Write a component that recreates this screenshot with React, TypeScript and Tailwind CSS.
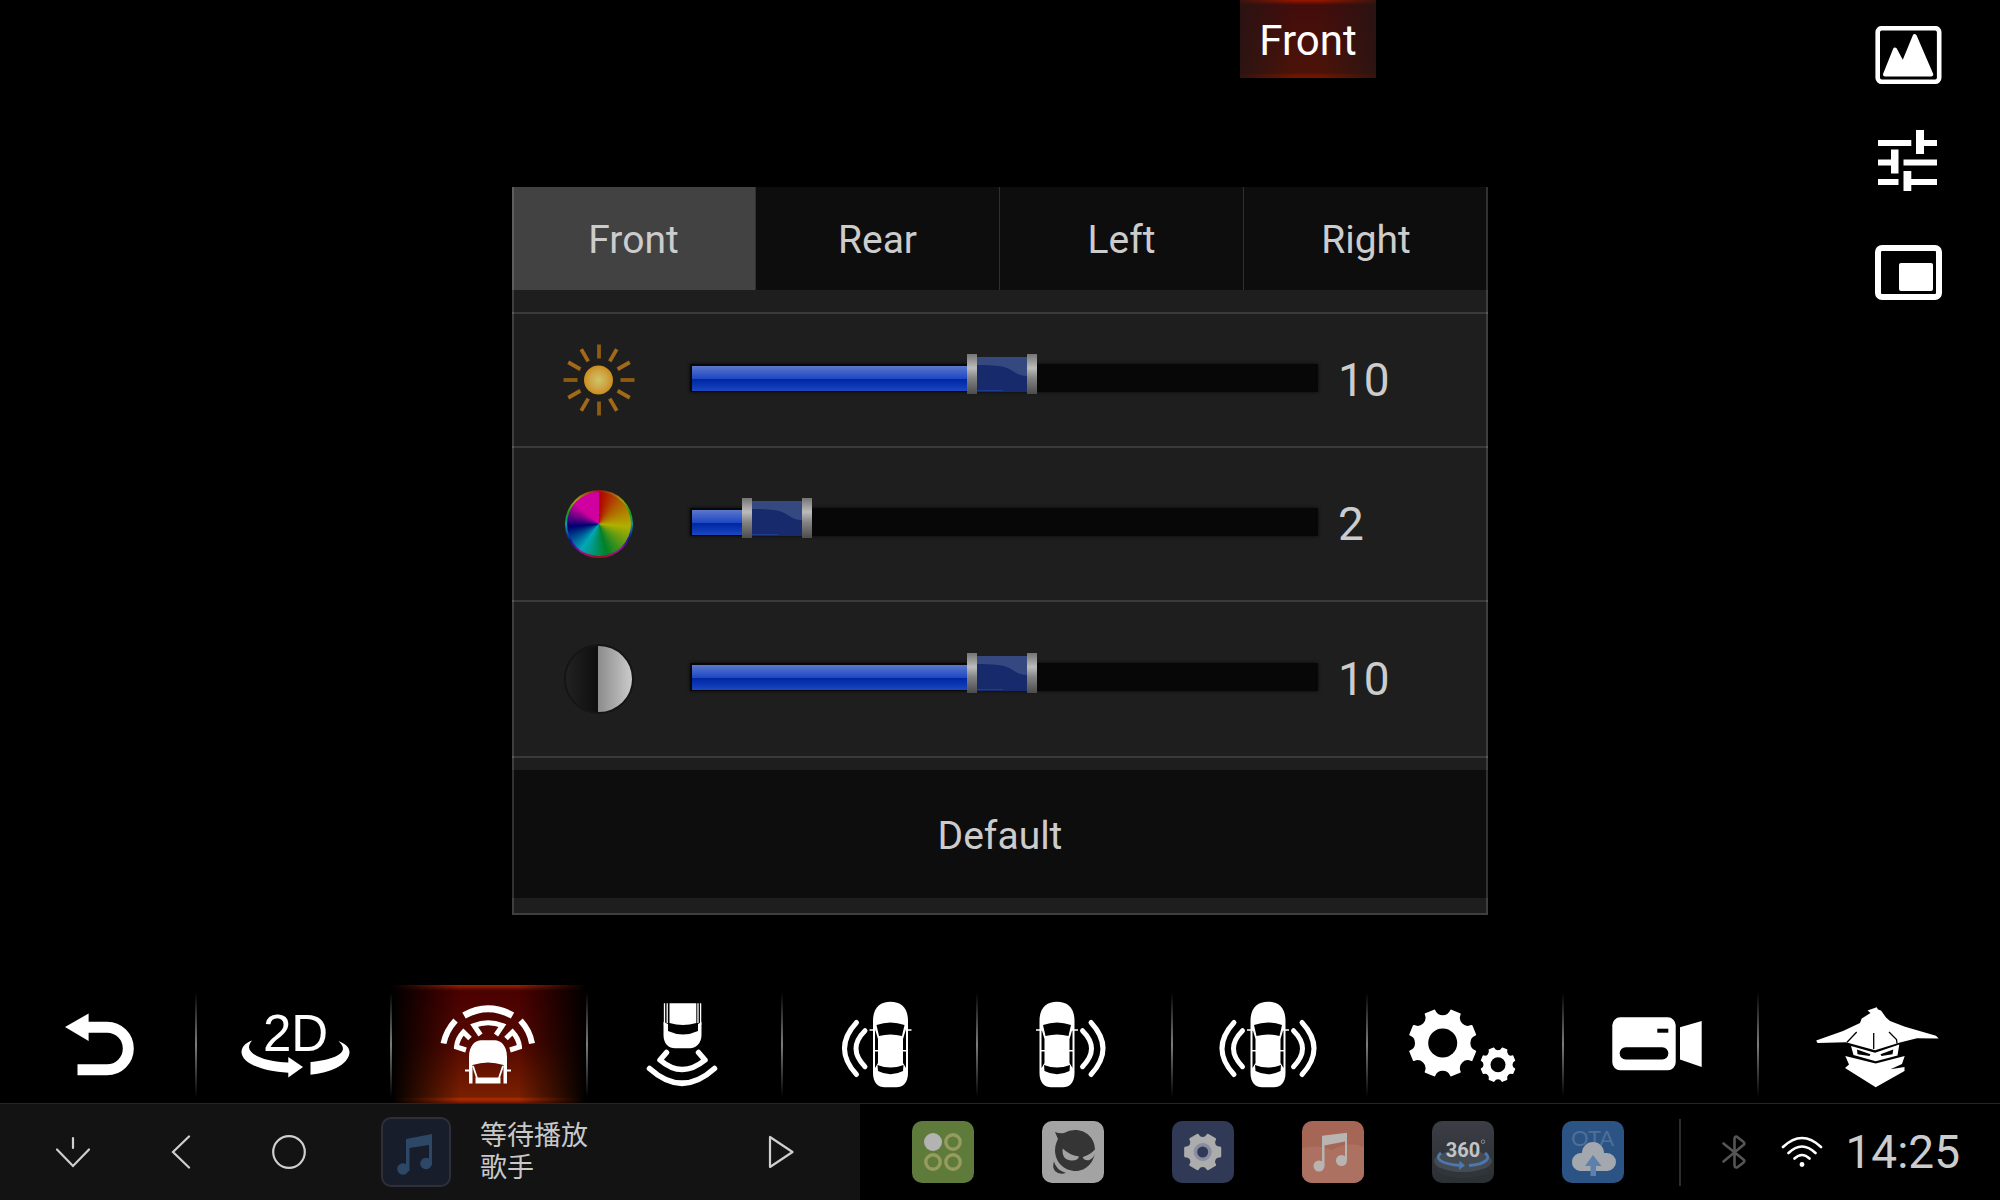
import { useState } from "react"
import type { CSSProperties, ReactNode } from "react"

/* ── Geometry helpers ──────────────────────────────────────────────────── */
function gearPath(cx: number, cy: number, r: number, teeth: number, toothDeg: number, notch: number, startDeg: number) {
  const step = 360 / teeth
  const pt = (deg: number) => {
    const a = (deg * Math.PI) / 180
    return `${(cx + r * Math.cos(a)).toFixed(2)} ${(cy + r * Math.sin(a)).toFixed(2)}`
  }
  let d = ""
  for (let i = 0; i < teeth; i++) {
    const mid = startDeg + i * step
    d += `${i === 0 ? "M" : "L"}${pt(mid - toothDeg)} L${pt(mid + toothDeg)} `
    d += `A${notch} ${notch} 0 0 0 ${pt(mid + step - toothDeg)} `
  }
  return d + "Z"
}

/* ── Toolbar icons, all drawn on a 160 × 118 canvas ────────────────────── */
function ToolIcon({ children }: { children: ReactNode }) {
  return (
    <svg viewBox="0 0 160 118" className="h-[118px] w-[160px] shrink-0" fill="white" aria-hidden="true">
      {children}
    </svg>
  )
}

function TopCar({ x }: { x: number }) {
  return (
    <g transform={`translate(${x} 0)`}>
      <path d="M-17.5 36 C-17.5 22 -10 16.7 0 16.7 C10 16.7 17.5 22 17.5 36 V88 C17.5 98 12 102.3 6 102.3 H-6 C-12 102.3 -17.5 98 -17.5 88 Z" />
      <path d="M-14 40 Q0 35 14 40 L11.5 51 Q0 48 -11.5 51 Z" fill="black" />
      <path d="M-15.5 44 L-12.5 54 V78 L-15.5 83 Z M15.5 44 L12.5 54 V78 L15.5 83 Z" fill="black" />
      <path d="M-13 80 Q0 85 13 80 L12.5 86 Q0 92.5 -12.5 86 Z" fill="black" />
      <path d="M-16 65.7 H-11 M16 65.7 H11 M-21 45 H-15 M21 45 H15" stroke="white" strokeWidth="1.6" />
    </g>
  )
}

function Waves({ x, side }: { x: number; side: 1 | -1 }) {
  return (
    <g transform={`translate(${x} 0) scale(${side} 1)`} fill="none" stroke="white" strokeWidth="5" strokeLinecap="round">
      <path d="M25.5 45.7 Q43.5 63.5 25.5 81.7" />
      <path d="M34 37.5 Q58 63.5 34 89.5" />
    </g>
  )
}

const icons = {
  back: (
    <ToolIcon>
      <path d="M46 42 L69.6 28.5 V56 Z" />
      <path d="M68 42.2 H88 a21.3 21.3 0 0 1 0 42.6 H58.5" fill="none" stroke="white" strokeWidth="11" />
    </ToolIcon>
  ),
  flat: (
    <ToolIcon>
      <text x="49" y="66" fontSize="51" fontFamily="Liberation Sans, Arial, sans-serif">2D</text>
      <path d="M38 55.5 C31 58 27.5 62 27.5 67.5 C28.5 78 46 86 74.3 87.8 V92.5 L89 82 L74.3 72 V77.5 C55 77 36 71 35 62.5 C35 60 36 58 38 55.5 Z" />
      <path d="M124.5 56 C132 59 136 63 135.5 68 C134 80 116 88 96.5 89.7 V77 C114 75.5 128 71 129 64 C129 61 127 58.5 124.5 56 Z" />
    </ToolIcon>
  ),
  front: (
    <ToolIcon>
      <g fill="none" stroke="white" strokeWidth="6">
        <path d="M55 30.5 Q79 17 103.5 30.5" strokeWidth="7" />
        <path d="M34.5 58.5 Q37 46 46.5 35.5 M123 58.5 Q121 46 111.5 35.5" />
        <path d="M71.5 50 L65 40.5 Q79 35 93.5 40.5 L87 50" strokeWidth="5" />
        <path d="M61 53.5 L54.5 47 Q48 54 47.5 62 L57 65 M97 53.5 L103.5 47 Q110 54 110.5 62 L101 65" strokeWidth="5" />
      </g>
      <path d="M60 98.5 V72 C60 60 67 55.3 72 55.3 H86 C91 55.3 98 60 98 72 V98.5 H94.5 V80 Q79 75 63.5 80 V98.5 Z" />
      <path d="M66.5 92.5 H91.5 V98.5 H66.5 Z" />
      <path d="M64 81 L68 93 M94 81 L90 93 M56 85.5 H62 M102 85.5 H96" stroke="white" strokeWidth="1.8" />
    </ToolIcon>
  ),
  rear: (
    <ToolIcon>
      <path d="M65.5 18.3 H92.3 V38 Q79 42 65.5 38 Z" />
      <path d="M59.5 37 L64 39 L64 46 Q79 53 94 46 L94 39 L97.5 37 V50 C97.5 59 91 63.3 86 63.3 H71 C65 63.3 59.5 59 59.5 50 Z" />
      <path d="M60.5 18.3 V40 M63.2 18.3 V38 M96.6 18.3 V40 M94 18.3 V38" stroke="white" strokeWidth="1.3" />
      <g fill="none" stroke="white" strokeWidth="5.5" strokeLinecap="round">
        <path d="M62.5 67.5 L56 75 Q78 94 101 75 L94.5 67.5" strokeLinejoin="round" />
        <path d="M45.5 83.5 Q78 113 110.5 83.5" />
      </g>
    </ToolIcon>
  ),
  left: (
    <ToolIcon>
      <TopCar x={91.5} />
      <Waves x={91.5} side={-1} />
    </ToolIcon>
  ),
  right: (
    <ToolIcon>
      <TopCar x={62} />
      <Waves x={62} side={1} />
    </ToolIcon>
  ),
  both: (
    <ToolIcon>
      <TopCar x={78} />
      <Waves x={78} side={1} />
      <Waves x={78} side={-1} />
    </ToolIcon>
  ),
  gears: (
    <ToolIcon>
      <path d={gearPath(57.7, 58, 33.5, 8, 8, 9, 22.5)} stroke="white" strokeWidth="2" strokeLinejoin="round" />
      <circle cx="57.7" cy="58" r="14.5" fill="black" />
      <path d={gearPath(113, 79.7, 17, 8, 8, 4.7, 22.5)} stroke="white" strokeWidth="1.5" strokeLinejoin="round" />
      <circle cx="113" cy="79.7" r="7.5" fill="black" />
    </ToolIcon>
  ),
  camera: (
    <ToolIcon>
      <rect x="32.3" y="32.3" width="63.4" height="53" rx="8" />
      <rect x="39.7" y="62.3" width="48.6" height="12.2" rx="6" fill="black" />
      <rect x="77.3" y="43.7" width="11" height="4" fill="black" />
      <path d="M100 42.3 L121.7 36 V82 L100 74.5 Z" />
    </ToolIcon>
  ),
  ninja: (
    <ToolIcon>
      <path d="M77.7 22.3 L68.5 25.5 L71.5 28 L62.7 33.5 L61 38 L44 46 L17.2 55.5 L18.5 58 L47 57.3 L76 65.3 L101 57.5 L118 53.3 L139.7 53.5 L137 50.8 L106 41.8 L91 36 L87 32.5 L82 25.5 L79 24.5 Z" />
      <path d="M57.7 47 L48 57.3 M74.7 48 V64 M90 47 L97.5 54.5 L98 58.5" stroke="black" strokeWidth="1.3" fill="none" />
      <path d="M52 61 L76 67.8 L100.3 59.5 L98.5 70.5 L76.7 76.3 L54.5 70 Z" />
      <path d="M58 64.5 L71.5 69.3 L70.5 71 L58.5 69.3 Z M94.3 64.5 L81.5 69.3 L82.5 71 L93.5 69.3 Z" fill="black" />
      <path d="M46.3 71 L76.7 78.5 L105.7 71 L103 79 L91.5 84.3 L105.5 82 L105.5 86 L76.7 102.3 L46 83 L50 79.5 Z" />
    </ToolIcon>
  ),
}

const tools: { id: keyof typeof icons; label: string }[] = [
  { id: "back", label: "Back" },
  { id: "flat", label: "2D view" },
  { id: "front", label: "Front view" },
  { id: "rear", label: "Rear view" },
  { id: "left", label: "Left view" },
  { id: "right", label: "Right view" },
  { id: "both", label: "Both sides" },
  { id: "gears", label: "Settings" },
  { id: "camera", label: "Recorder" },
  { id: "ninja", label: "Guard" },
]

/* ── Adjustment icons ──────────────────────────────────────────────────── */
function SunIcon() {
  return (
    <svg viewBox="0 0 72 72" className="size-[72px]" aria-hidden="true">
      <defs>
        <radialGradient id="sun">
          <stop offset="0" stopColor="#cfc468" />
          <stop offset="0.6" stopColor="#cda545" />
          <stop offset="1" stopColor="#cb8c1c" />
        </radialGradient>
      </defs>
      {Array.from({ length: 12 }, (_, i) => (
        <line key={i} x1="36" y1="0.5" x2="36" y2="14.5" stroke={i % 3 === 0 ? "#8e5c10" : "#a26a18"} strokeWidth="3.8" transform={`rotate(${i * 30} 36 36)`} />
      ))}
      <circle cx="35.5" cy="36" r="14.5" fill="url(#sun)" />
    </svg>
  )
}

function ColorIcon() {
  return (
    <div className="grid size-[68px] place-items-center rounded-full bg-[conic-gradient(#a01010,#a0a010_45deg,#10a010_70deg,#10a0a0_90deg,#1010a0_115deg,#a010a0_140deg,#a01010_180deg,#a010a0_215deg,#1010a0_240deg,#10a0a0_270deg,#10a010_290deg,#a0a010_315deg,#a01010)]">
      <div className="size-16 rounded-full bg-[conic-gradient(#b00000,#b06000_45deg,#b0b000_95deg,#00802a_165deg,#00a8b8_215deg,#000070_265deg,#780088_290deg,#d000a0_310deg,#d000a0)]" />
    </div>
  )
}

function ContrastIcon() {
  return (
    <div className="flex size-[70px] overflow-hidden rounded-full border-2 border-[#151515]">
      <div className="flex-1 bg-gradient-to-r from-[#222222] to-[#0e0e0e]" />
      <div className="w-[34px] bg-gradient-to-r from-[#8c8c8c] to-[#cbcbcb]" />
    </div>
  )
}

/* ── Slider ────────────────────────────────────────────────────────────── */
function SliderThumb({ style }: { style: CSSProperties }) {
  return (
    <svg viewBox="0 0 70 40" className="pointer-events-none absolute top-0 h-10 w-[70px]" style={style} aria-hidden="true">
      <defs>
        <linearGradient id="cap" x2="0" y2="1">
          <stop offset="0" stopColor="#747474" />
          <stop offset="0.35" stopColor="#bcbcbc" />
          <stop offset="0.6" stopColor="#848484" />
          <stop offset="1" stopColor="#4c4c4c" />
        </linearGradient>
      </defs>
      <rect x="9" y="3" width="52" height="35" fill="#162a6c" />
      <path d="M9 3 H60 V22 C47 22 46 13 31 12 C24 11 16 11 9 11 Z" fill="#364880" />
      <path d="M10 36.5 H36" stroke="#1c3c98" strokeWidth="1" />
      <rect width="10" height="40" fill="url(#cap)" />
      <rect x="60" width="10" height="40" fill="url(#cap)" />
    </svg>
  )
}

interface SliderProps {
  label: string
  value: number
  onChange: (value: number) => void
}

function Slider({ label, value, onChange }: SliderProps) {
  const offset = `calc((100% - 70px) * ${value / 20})`
  return (
    <div className="relative h-[52px] flex-1">
      <div className="absolute top-[10px] right-0 left-1 h-7 bg-[#070707] shadow-[0_0_3px_#0a0a0a]" />
      <div
        className="absolute top-3 left-[6px] h-[25px] bg-[linear-gradient(#5a78cc,#1f48c4_50%,#0028a4_54%,#0a34b0_75%,#1c48c0)]"
        style={{ width: offset }}
      />
      <SliderThumb style={{ left: offset }} />
      <input
        type="range"
        min={0}
        max={20}
        value={value}
        aria-label={label}
        onChange={(e) => onChange(Number(e.target.value))}
        className="absolute inset-x-0 top-0 h-10 w-full cursor-pointer appearance-none bg-transparent [&::-webkit-slider-thumb]:h-10 [&::-webkit-slider-thumb]:w-[70px] [&::-webkit-slider-thumb]:appearance-none"
      />
    </div>
  )
}

/* ── Settings dialog ───────────────────────────────────────────────────── */
const tabs = ["Front", "Rear", "Left", "Right"]
const defaults = { brightness: 10, color: 2, contrast: 10 }

function Dialog() {
  const [tab, setTab] = useState("Front")
  const [values, setValues] = useState(defaults)

  const rows = [
    { key: "brightness" as const, icon: <SunIcon />, height: "h-[134px]" },
    { key: "color" as const, icon: <ColorIcon />, height: "h-[154px]" },
    { key: "contrast" as const, icon: <ContrastIcon />, height: "h-[156px]" },
  ]

  return (
    <section className="relative mx-auto mt-[109px] w-full max-w-[976px] bg-[#1e1e1e] text-[#cccccc] after:pointer-events-none after:absolute after:inset-0 after:border-x-2 after:border-b-2 after:border-white/15">
      <div className="grid h-[103px] grid-cols-4 divide-x divide-[#303030] bg-[#0d0d0d]">
        {tabs.map((t) => (
          <button key={t} type="button" onClick={() => setTab(t)} className={t === tab ? "bg-[#424242] pt-1 text-[39px]" : "pt-1 text-[39px]"}>
            {t}
          </button>
        ))}
      </div>

      <div className="mt-[22px] border-b-2 border-[#3a3a3a]">
        {rows.map((row) => (
          <div key={row.key} className={`flex items-center border-t-2 border-[#3a3a3a] pl-[51px] ${row.height}`}>
            <div className="grid w-[72px] shrink-0 place-items-center">{row.icon}</div>
            <div className="flex flex-1 pl-[51px]">
              <Slider label={row.key} value={values[row.key]} onChange={(v) => setValues({ ...values, [row.key]: v })} />
            </div>
            <output className="w-[170px] pl-5 text-[46px] leading-none">{values[row.key]}</output>
          </div>
        ))}
      </div>

      <button type="button" onClick={() => setValues(defaults)} className="mt-3 block h-32 w-full bg-[#0d0d0d] pt-1 text-[39px]">
        Default
      </button>
      <div className="h-[17px]" />
    </section>
  )
}

/* ── Side buttons over the camera view ─────────────────────────────────── */
function SideButtons() {
  return (
    <nav className="absolute top-[26px] right-[58px] flex w-[67px] flex-col items-center">
      <button type="button" aria-label="Picture">
        <svg viewBox="0 0 67 58" className="block h-[58px] w-[67px]" fill="white">
          <rect x="2.7" y="2.2" width="61.5" height="53.5" rx="4" fill="none" stroke="white" strokeWidth="4.6" />
          <path d="M10 48.5 L20 23.5 L28 38.5 L39.7 10 L56.3 48.5 Z" stroke="white" strokeWidth="4" strokeLinejoin="round" />
        </svg>
      </button>
      <button type="button" aria-label="Adjust" className="mt-[46px]">
        <svg viewBox="0 0 61 61" className="block size-[61px]" fill="white">
          <path d="M0 10 H33.3 V16 H0 Z M38 0 H46 V10 H59 V16 H46 V24 H38 Z" />
          <path d="M0 29.5 H13 V19.5 H20.5 V43.5 H13 V35.5 H0 Z M25.5 29.5 H59 V35.5 H25.5 Z" />
          <path d="M0 49 H20.5 V55 H0 Z M25.5 41 H33.3 V49 H59 V55 H33.3 V61 H25.5 Z" />
        </svg>
      </button>
      <button type="button" aria-label="Picture in picture" className="mt-[54px]">
        <svg viewBox="0 0 67 55" className="block h-[55px] w-[67px]" fill="white">
          <rect x="3" y="3" width="61" height="49" rx="4" fill="none" stroke="white" strokeWidth="6" />
          <rect x="24" y="18" width="34" height="28" rx="2" />
        </svg>
      </button>
    </nav>
  )
}

/* ── View toolbar ──────────────────────────────────────────────────────── */
function Toolbar() {
  const [active, setActive] = useState("front")
  return (
    <nav className="flex h-[118px] pl-0.5">
      {tools.map((tool, i) => (
        <div key={tool.id} className={i < 9 ? "flex w-[9.77%] shrink-0 items-center" : "flex flex-1 items-center"}>
          <button
            type="button"
            aria-label={tool.label}
            onClick={() => setActive(tool.id)}
            className={
              tool.id === active
                ? "flex h-full flex-1 justify-center bg-[linear-gradient(90deg,#000_0%,transparent_35%,transparent_65%,#000_100%),linear-gradient(#a82000_0px,#500800_5px,transparent_6px,transparent_112px,#b02c00_114px,#701800_118px),linear-gradient(#480000,#560800_50%,#7c2200)]"
                : "flex h-full flex-1 justify-center"
            }
          >
            {icons[tool.id]}
          </button>
          {i < 9 && <span className="h-[105px] w-[2px] bg-gradient-to-b from-transparent via-[#7c7c7c] to-transparent" />}
        </div>
      ))}
    </nav>
  )
}

/* ── Dock apps, 62 × 62 tiles ──────────────────────────────────────────── */
const apps = [
  {
    label: "Apps",
    tile: "bg-[#5e7b3c]",
    art: (
      <>
        <circle cx="21" cy="21" r="9" fill="#b3b3b3" />
        <g fill="none" stroke="#959c5c" strokeWidth="3.4">
          <circle cx="41" cy="21" r="7.2" />
          <circle cx="21" cy="41" r="7.2" />
          <circle cx="41" cy="41" r="7.2" />
        </g>
      </>
    ),
  },
  {
    label: "Assistant",
    tile: "bg-[#a3a3a3]",
    art: (
      <>
        <path d="M13 11 Q18 13 22 12 Q27 9 33 9 C45 9 53 18 53 29 C53 41 44 50 34 50 C22 50 13 41 13 29 C13 24 15 20 16 18 Z" fill="#353535" />
        <path d="M20.7 27.5 Q27 34 37 35.5 Q36 40 29 39.5 C22 39 20 34 20.7 27.5 Z M53.5 28 Q48 34 40.7 36 Q42 40 47.5 39 C52 37 54 32 53.5 28 Z" fill="#a3a3a3" />
        <path d="M12 40.5 Q14 49 24 52 Q17 54 13 50 Q10 46 12 40.5 Z" fill="#353535" />
      </>
    ),
  },
  {
    label: "Settings",
    tile: "bg-[#303a57]",
    art: (
      <>
        <path d={gearPath(30.7, 31, 17.5, 6, 13, 5.6, 0)} fill="#acacac" stroke="#acacac" strokeWidth="3" strokeLinejoin="round" />
        <circle cx="30.7" cy="31" r="9" fill="#888da0" />
        <circle cx="30.7" cy="31" r="5.5" fill="#303a57" />
      </>
    ),
  },
  {
    label: "Music",
    tile: "bg-[#a56655]",
    art: (
      <>
        <path d="M0 27 Q14 23 30 29 Q46 20 62 26 V62 H0 Z" fill="#ad7162" />
        <path d="M20 14.7 L45 11.7 V39 H43 V20.5 L22.5 24.5 V45 H20 Z" fill="#b8b4b2" />
        <circle cx="17" cy="45" r="5.5" fill="#b8b4b2" />
        <circle cx="39.5" cy="39.5" r="5.5" fill="#b8b4b2" />
      </>
    ),
  },
  {
    label: "360 camera",
    tile: "bg-gradient-to-b from-[#3b3e45] to-[#2b3034]",
    art: (
      <>
        <ellipse cx="31" cy="45" rx="29" ry="12" fill="#30353a" />
        <ellipse cx="31" cy="40" rx="29" ry="11" fill="#454b52" />
        <g fill="none" stroke="#4c78ae" strokeWidth="2.8">
          <path d="M9 32 C2 37 8 43 29 44.5" />
          <path d="M53 32 C60 37 54 43 37 44.5" />
        </g>
        <path d="M27.5 39.5 L33 44.5 L27 49 Z" fill="#4c78ae" />
        <text x="31" y="36" fontSize="20" fontWeight="700" textAnchor="middle" fill="#c4c4c4" fontFamily="Roboto, sans-serif">360</text>
        <circle cx="51" cy="20.7" r="1.8" fill="none" stroke="#9a9a9a" strokeWidth="0.8" />
      </>
    ),
  },
  {
    label: "Update",
    tile: "bg-[#2b5485]",
    art: (
      <>
        <text x="9" y="25" fontSize="22" fill="#4f6e98" fontFamily="Lato, sans-serif">OTA</text>
        <path d="M18 50 a9 9 0 0 1 2 -18 a11 11 0 0 1 22 0 h3 a9 9 0 0 1 0 18 Z" fill="#a2a8ad" />
        <path d="M31 34 L39.5 45 H34 V55 H28.5 V45 H23 Z" fill="#5d80ad" />
      </>
    ),
  },
]

/* ── System bar ────────────────────────────────────────────────────────── */
function SystemBar() {
  return (
    <footer className="flex h-[97px] border-t border-[#262626]">
      <div className="flex w-[43%] items-center bg-[#131313] pl-14">
        <div className="flex items-center text-[#cfcfcf]">
          <button type="button" aria-label="Hide">
            <svg viewBox="0 0 34 34" className="size-[34px]" fill="none" stroke="currentColor" strokeWidth="2.2" strokeLinecap="round">
              <path d="M17 3 V13 M1 14.5 L17 31 L33 14.5" />
            </svg>
          </button>
          <button type="button" aria-label="Previous screen" className="ml-[81px]">
            <svg viewBox="0 0 20 34" className="h-[34px] w-5" fill="none" stroke="currentColor" strokeWidth="2.2" strokeLinecap="round">
              <path d="M18 1.5 L2 17 L18 32.5" />
            </svg>
          </button>
          <button type="button" aria-label="Home" className="ml-[81px]">
            <svg viewBox="0 0 34 34" className="size-[34px]" fill="none" stroke="currentColor" strokeWidth="2.2">
              <circle cx="17" cy="17" r="15.8" />
            </svg>
          </button>
        </div>

        <div className="ml-[75px] grid size-[70px] shrink-0 place-items-center rounded-[10px] border-2 border-[#302f39] bg-[#171d2b]">
          <svg viewBox="0 0 66 66" className="size-[66px]" aria-hidden="true">
            <g fill="#2c4866">
              <path d="M23 20 L49 15 V46 H46 V26 L26.5 29 V52 H23 Z" />
              <circle cx="20" cy="50" r="5.8" />
              <circle cx="43" cy="44.5" r="5.8" />
            </g>
          </svg>
        </div>
        <div className="ml-[29px] text-[27px] leading-8 text-[#c8c8c8]">
          <div>等待播放</div>
          <div>歌手</div>
        </div>
        <button type="button" aria-label="Play" className="mr-[66px] ml-auto text-[#cfcfcf]">
          <svg viewBox="0 0 26 34" className="h-[34px] w-[26px]" fill="none" stroke="currentColor" strokeWidth="2.2" strokeLinejoin="round">
            <path d="M2 2 V32 L24.5 17 Z" />
          </svg>
        </button>
      </div>

      <div className="flex flex-1 items-center pl-[52px]">
        <div className="flex gap-[68px]">
          {apps.map((app) => (
            <button key={app.label} type="button" aria-label={app.label} className={`size-[62px] overflow-hidden rounded-[10px] ${app.tile}`}>
              <svg viewBox="0 0 62 62" className="size-[62px]">
                {app.art}
              </svg>
            </button>
          ))}
        </div>
        <span className="ml-[55px] h-[67px] w-[2px] bg-[#2c2c2c]" />
        <svg viewBox="0 0 24 34" className="ml-[41px] h-[34px] w-6" fill="none" stroke="#555555" strokeWidth="2.6" strokeLinecap="round" strokeLinejoin="round" aria-hidden="true">
          <path d="M1.5 8.5 L22 25 Q23 26.5 21 28 L15 32.5 Q12.5 33 12.5 30 V4 Q12.5 1 15 1.8 L21 6.5 Q23 8 22 9.5 L1.5 26.5" />
        </svg>
        <svg viewBox="0 0 42 32" className="ml-[35px] h-8 w-[42px]" fill="none" stroke="white" strokeWidth="2.6" strokeLinecap="round" aria-hidden="true">
          <path d="M2 11 Q21 -7 40 11 M7.5 17 Q21 4 34.5 17 M13.5 22.5 Q21 15.5 28.5 22.5" />
          <circle cx="21" cy="28.5" r="2.4" fill="white" stroke="none" />
        </svg>
        <time className="mr-10 ml-auto text-[46px] leading-none text-[#cccccc]">14:25</time>
      </div>
    </footer>
  )
}

export default function App() {
  return (
    <div className="flex min-h-screen flex-col bg-black font-['Roboto','Noto_Sans_CJK_SC',sans-serif]">
      <main className="relative flex-1">
        <header className="flex justify-center pl-[30.8%]">
          <h1 className="flex h-[78px] w-[136px] items-center justify-center bg-[linear-gradient(90deg,#241414cc,transparent_40%,transparent_60%,#241414cc),linear-gradient(#981800_0px,#681000_3px,transparent_5px,transparent_73px,#701400_75px,#701400_78px),linear-gradient(#420c0c,#4c1408)] pt-1 text-[42px] leading-none text-white">
            Front
          </h1>
        </header>
        <Dialog />
        <SideButtons />
      </main>
      <Toolbar />
      <SystemBar />
    </div>
  )
}
